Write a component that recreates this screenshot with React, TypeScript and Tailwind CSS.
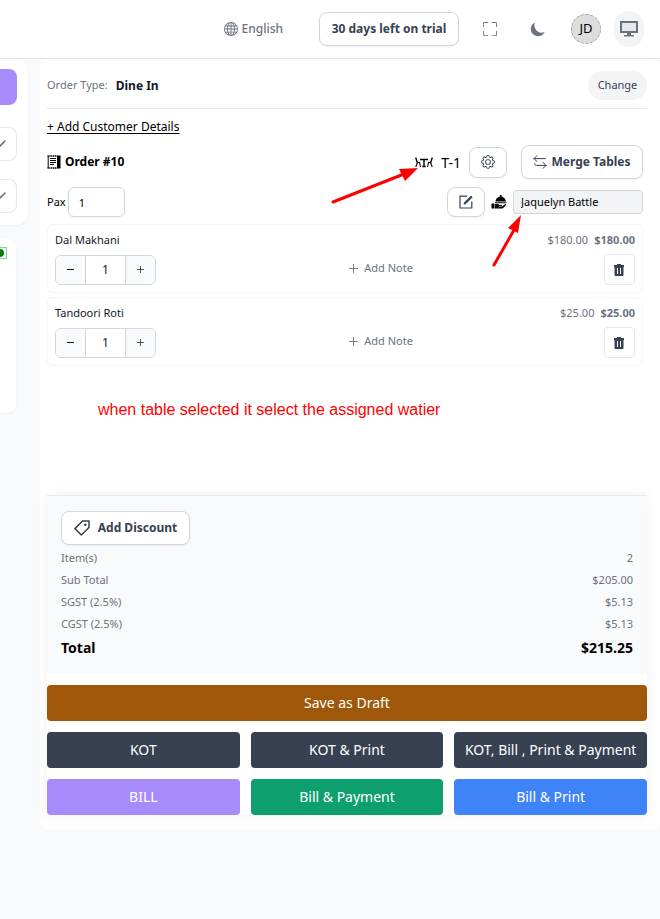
import type { ReactNode } from "react";
import { BsFullscreen, BsGear, BsGlobe } from "react-icons/bs";
import { HiMoon } from "react-icons/hi";

const outlined =
  "flex items-center justify-center rounded-lg border border-gray-300 bg-white text-gray-700 shadow-xs";

function ReceiptIcon() {
  return (
    <svg viewBox="0 0 14 14" className="h-3.5 w-3.5" aria-hidden="true">
      <path d="M.5 1h13M.5 13h13" stroke="#000" strokeWidth="1.6" strokeDasharray="1.3 .5" />
      <path d="M1.2 1v12" stroke="#000" strokeWidth="1" />
      <path d="M10 1h3.5v12H10z" fill="#000" />
      <path d="M3 3.5h6M3 5.5h6M3 7.5h6M3 9.5h4" stroke="#000" strokeWidth="1" />
    </svg>
  );
}

function TableIcon() {
  return (
    <svg viewBox="0 0 18 12" className="h-3 w-[18px]" fill="none" stroke="#000" aria-hidden="true">
      <path d="M.7 1.500l1.600 5M17.300 1.500l-1.600 5" strokeWidth="1.400" />
      <path d="M2 6.500h3M2.400 6.500L.800 11M4.500 6.500L5.500 11M16 6.500h-3M15.600 6.500l1.600 4.500M13.500 6.500l-1 4.500" strokeWidth="1.100" />
      <path d="M5 3.500h8M9 3.500v6.500M7.300 10.500h3.400" strokeWidth="1.400" />
    </svg>
  );
}

function SwapIcon() {
  return (
    <svg viewBox="0 0 14 14" className="h-3.5 w-3.5" fill="none" stroke="currentColor" strokeLinecap="round" strokeLinejoin="round" aria-hidden="true">
      <path d="M4 .6L1 3.6l3 3M1 3.6h11.500M10 7.400l3 3-3 3M13 10.400H3.500a2 2 0 0 1-2-1.600" />
    </svg>
  );
}

function EditIcon() {
  return (
    <svg viewBox="0 0 14 14" className="h-3.5 w-3.5" fill="none" stroke="currentColor" aria-hidden="true">
      <path d="M8 1.2H1V13h11.8V6.5" strokeWidth="1.2" />
      <path d="M5 9.2l.5-1.8L12 1l1.2 1.2-6.4 6.5z" fill="currentColor" strokeWidth=".8" />
    </svg>
  );
}

function WaiterIcon() {
  return (
    <svg viewBox="0 0 16 16" className="h-4 w-4 shrink-0" aria-hidden="true">
      <path d="M4.5 7.6a5.2 5.2 0 0 1 10.4 0zM8.8 1h1.8v1.8H8.8zM4 8.3h11.5v1H4z" />
      <path d="M.5 9.5h3v5h-3zM4 10h3l1.4.9h2.2c.8 0 .8 1.1 0 1.1H7.8v.6H11l3-2.4c.9-.5 1.6.4.9 1.1l-3 2.9c-.4.3-.8.4-1.3.4H4z" />
    </svg>
  );
}

function TrashIcon() {
  return (
    <svg viewBox="0 0 12 14" className="h-3.5 w-3" fill="currentColor" aria-hidden="true">
      <path fillRule="evenodd" d="M4 1h4v1h3v2h-.5v8c0 .6-.4 1-1 1h-7c-.6 0-1-.4-1-1V4H1V2h3zM4 5v6h1V5zm3 0v6h1V5z" />
    </svg>
  );
}

function DesktopIcon() {
  return (
    <svg viewBox="0 0 20 18" className="h-[18px] w-5 fill-gray-500" aria-hidden="true">
      <path d="M1 1h18v12H1z" />
      <path d="M3 3h14v8H3z" className="fill-gray-200" />
      <path d="M8 13h4v2H8zM5 15h10v1.6H5z" />
    </svg>
  );
}

function TagIcon() {
  return (
    <svg viewBox="0 0 16 16" className="h-4 w-4" aria-hidden="true">
      <path d="M8.5 1H15v6.5L7.3 15 .9 8.6z" fill="none" stroke="currentColor" strokeWidth="1.5" strokeLinejoin="round" />
      <circle cx="11.3" cy="4.7" r="1.3" fill="currentColor" />
    </svg>
  );
}

function PlusIcon({ size }: { size: number }) {
  return (
    <svg viewBox="0 0 10 10" width={size} height={size} stroke="currentColor" aria-hidden="true">
      <path d="M5 0v10M0 5h10" />
    </svg>
  );
}

function Header() {
  return (
    <header className="flex h-[59px] items-center justify-end border-b border-gray-200 bg-white pr-4">
      <button className="flex items-center gap-1 text-[12px] font-medium text-gray-500">
        <BsGlobe className="h-3.5 w-3.5" />
        English
      </button>
      <button className={`${outlined} ml-9 h-[34px] w-[140px] text-[12px] font-bold`}>30 days left on trial</button>
      <button aria-label="Full screen" className="ml-6 text-gray-500">
        <BsFullscreen className="h-3.5 w-3.5" />
      </button>
      <button aria-label="Dark mode" className="ml-8 text-gray-500">
        <HiMoon className="h-[18px] w-[18px]" />
      </button>
      <button className="ml-6 flex h-[30px] w-[30px] items-center justify-center rounded-full border border-dashed border-gray-400 bg-[#dddddd] text-[13px]">
        JD
      </button>
      <button aria-label="Display" className="ml-[13px] flex h-9 w-[30px] items-center justify-center rounded-full bg-gray-100">
        <DesktopIcon />
      </button>
    </header>
  );
}

function Chevron() {
  return (
    <svg viewBox="0 0 12 8" className="-ml-1.5 h-2 w-3" fill="none" stroke="#6b7280" strokeWidth="1.6" strokeLinecap="round" aria-hidden="true">
      <path d="M1 1l5 5 5-5" />
    </svg>
  );
}

function MenuEdge() {
  return (
    <aside className="w-10 shrink-0 overflow-hidden">
      <div className="mr-3 rounded-r-xl bg-white pt-2.5 pr-[11px] pb-3 shadow-xs">
        <button aria-label="Search" className="block h-9 w-full rounded-r-lg bg-[#a78bfa]" />
        <button aria-label="Menu" className="mt-[22px] flex h-[34px] w-full items-center overflow-hidden rounded-r-lg border border-l-0 border-gray-200">
          <Chevron />
        </button>
        <button aria-label="Category" className="mt-[18px] flex h-[34px] w-full items-center overflow-hidden rounded-r-lg border border-l-0 border-gray-200">
          <Chevron />
        </button>
      </div>
      <div className="mt-3.5 h-[174px] w-4 rounded-r-lg bg-white pt-2 shadow-xs">
        <div className="flex h-3 w-[7px] items-center overflow-hidden border border-l-0 border-green-600/50">
          <span className="-ml-1 h-2 w-2 shrink-0 rounded-full bg-[#008000]" />
        </div>
      </div>
    </aside>
  );
}

function Item({ name, price }: { name: string; price: string }) {
  return (
    <li className="h-[69px] rounded-md border border-gray-100 px-[7px] pt-[7px]">
      <div className="flex h-4 items-center text-[11px]">
        <span className="grow text-gray-900">{name}</span>
        <span className="text-gray-500">{price}</span>
        <span className="ml-1.5 font-bold text-gray-500">{price}</span>
      </div>
      <div className="mt-1.5 grid grid-cols-3 items-center">
        <div className="flex h-[30px] w-[101px] overflow-hidden rounded-md border border-gray-300 text-gray-900">
          <button aria-label={`Less ${name}`} className="flex w-[29px] items-center justify-center bg-gray-50">
            <span className="h-px w-[7px] bg-gray-900" />
          </button>
          <input
            aria-label={`Quantity of ${name}`}
            defaultValue="1"
            className="w-10 grow border-x border-gray-300 bg-white text-center text-[12px]"
          />
          <button aria-label={`More ${name}`} className="flex w-[29px] items-center justify-center bg-gray-50">
            <PlusIcon size={7} />
          </button>
        </div>
        <button className="flex items-center gap-1.5 pb-0.5 pl-[101px] text-[11px] whitespace-nowrap text-gray-500">
          <PlusIcon size={9} />
          Add Note
        </button>
        <button aria-label={`Delete ${name}`} className="flex h-[31px] w-[31px] items-center justify-center justify-self-end rounded-sm border border-gray-200 text-gray-700">
          <TrashIcon />
        </button>
      </div>
    </li>
  );
}

function Row({ label, value }: { label: string; value: string }) {
  return (
    <div className="flex h-[22px] items-center justify-between text-[11px] text-gray-500">
      <dt>{label}</dt>
      <dd>{value}</dd>
    </div>
  );
}

function Action({ color, children }: { color: string; children: ReactNode }) {
  return <button className={`h-9 rounded-sm pb-0.5 text-[14px] whitespace-nowrap text-white ${color}`}>{children}</button>;
}

function Arrows() {
  return (
    <svg className="pointer-events-none absolute top-[160px] left-[325px] h-[110px] w-[205px]" viewBox="325 160 205 110" aria-hidden="true">
      <path d="M333 202L404 174M494 265L514 230" stroke="red" strokeWidth="3" strokeLinecap="round" />
      <path d="M418 168L399 169L405 181zM521 215L508 228L518 233z" fill="red" />
    </svg>
  );
}

export default function App() {
  return (
    <div className="relative min-h-screen bg-gray-50 font-['Noto_Sans',sans-serif] text-black">
      <Header />
      <div className="flex">
        <MenuEdge />
        <main className="min-w-0 grow rounded-lg bg-white pr-[13px] pb-3.5 pl-[7px]">
          <div className="flex h-[50px] items-center border-b border-gray-200 pt-1 text-[11px]">
            <span className="text-gray-500">Order Type:</span>
            <span className="ml-2 grow text-[12px] font-bold text-gray-900">Dine In</span>
            <button className="h-[29px] w-[59px] rounded-full bg-gray-100 text-gray-700">Change</button>
          </div>
          <div className="flex h-9 items-center">
            <a href="#customer" className="text-[12px] underline underline-offset-2">+ Add Customer Details</a>
          </div>
          <div className="flex h-[34px] items-center pr-1">
            <ReceiptIcon />
            <h1 className="ml-1 grow text-[12px] font-bold">Order #10</h1>
            <TableIcon />
            <span className="ml-2 text-[14px]">T-1</span>
            <button aria-label="Table settings" className={`${outlined} ml-2 h-[31px] w-[38px]`}>
              <BsGear className="h-3.5 w-3.5" />
            </button>
            <button className={`${outlined} ml-3.5 h-[34px] w-[122px] gap-1 text-[12px] font-bold`}>
              <SwapIcon />
              Merge Tables
            </button>
          </div>
          <div className="mt-2 flex h-[30px] items-center pr-1">
            <label htmlFor="pax" className="text-[11px]">Pax</label>
            <input id="pax" defaultValue="1" className="mr-auto ml-0.5 h-[30px] w-[57px] rounded-md border border-gray-300 px-2.5 text-[11px] shadow-xs" />
            <button aria-label="Edit" className={`${outlined} h-[30px] w-[38px]`}>
              <EditIcon />
            </button>
            <span className="mx-1.5"><WaiterIcon /></span>
            <select aria-label="Waiter" className="h-6 w-[130px] appearance-none rounded-sm border border-gray-300 bg-gray-100 px-[7px] text-[11px]">
              <option>Jaquelyn Battle</option>
            </select>
          </div>
          <ul className="mt-[7px] flex h-[271px] flex-col gap-1 pr-1">
            <Item name="Dal Makhani" price="$180.00" />
            <Item name="Tandoori Roti" price="$25.00" />
          </ul>
          <div className="shadow-[0_0_12px_rgba(0,0,0,0.06)]">
            <section className="border-t border-gray-200 bg-gray-50 px-3.5 pt-[15px] pb-3.5">
              <button className={`${outlined} h-[34px] w-[129px] gap-2 text-[12px] font-bold`}>
                <TagIcon />
                Add Discount
              </button>
              <dl className="mt-0.5 mb-px">
                <Row label="Item(s)" value="2" />
                <Row label="Sub Total" value="$205.00" />
                <Row label="SGST (2.5%)" value="$5.13" />
                <Row label="CGST (2.5%)" value="$5.13" />
                <div className="flex h-6 items-center justify-between text-[14px] font-bold">
                  <dt>Total</dt>
                  <dd>$215.25</dd>
                </div>
              </dl>
            </section>
            <div className="grid grid-cols-3 gap-[11px] bg-white pt-[11px]">
              <Action color="col-span-3 bg-[#9f580a]">Save as Draft</Action>
              <Action color="bg-[#374151]">KOT</Action>
              <Action color="bg-[#374151]">KOT &amp; Print</Action>
              <Action color="bg-[#374151]">KOT, Bill , Print &amp; Payment</Action>
              <Action color="bg-[#a78bfa]">BILL</Action>
              <Action color="bg-[#0e9f6e]">Bill &amp; Payment</Action>
              <Action color="bg-[#3f83f8]">Bill &amp; Print</Action>
            </div>
          </div>
        </main>
      </div>
      <Arrows />
      <p className="pointer-events-none absolute top-[398px] left-[98px] font-['Liberation_Sans',sans-serif] text-base text-[#ff0000]">
        when table selected it select the assigned watier
      </p>
    </div>
  );
}
